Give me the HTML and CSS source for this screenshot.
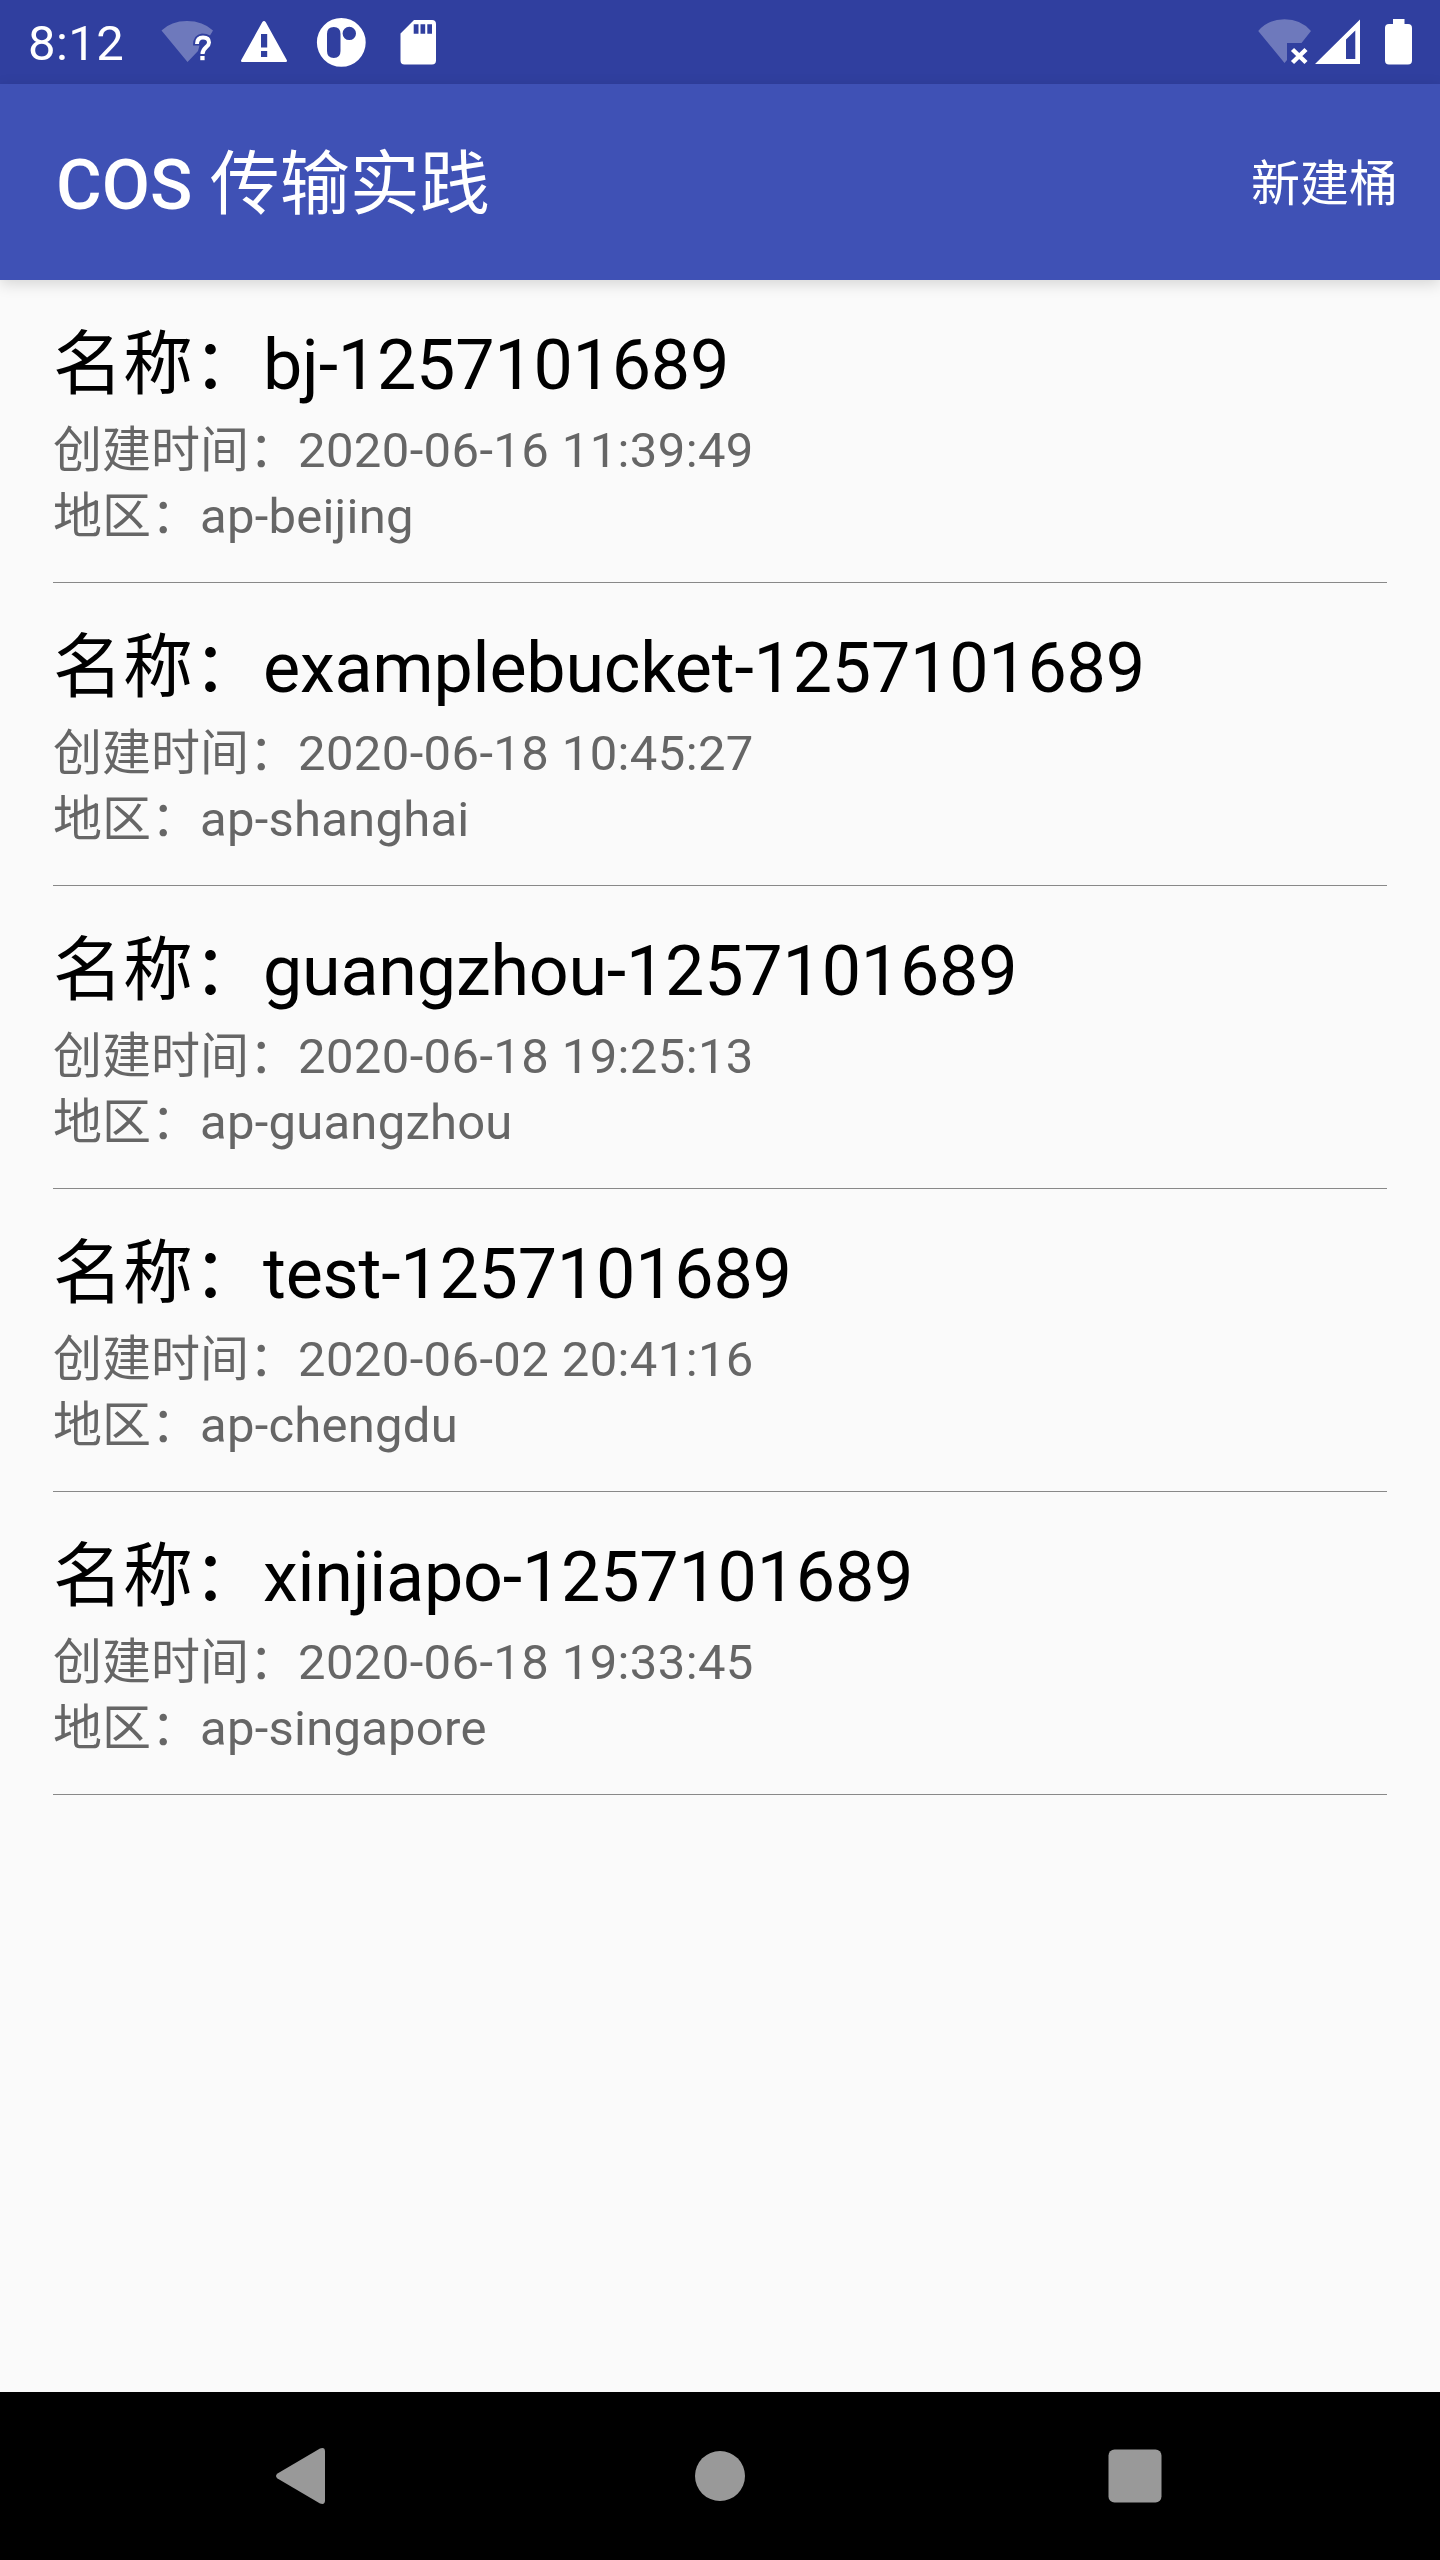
FILE: index.html
```html
<!DOCTYPE html>
<html lang="zh-CN">
<head>
<meta charset="utf-8">
<title>COS 传输实践</title>
<link rel="stylesheet" href="styles.css">
</head>
<body>
<div class="screen">
  <div class="status-bar">
    <span class="clock">8:12</span>
    <svg class="status-left" width="300" height="84" viewBox="0 0 300 84">
      <path fill="#fff" fill-opacity=".3" d="M21.5 30.5Q31 21 47 21T73 30.5L70 35.5Q67 33.500 62 33.500Q53 34.500 53 45.500H59.500L58 51L47.500 62Z"/>
      <path fill="none" stroke="#fff" stroke-width="4" d="M57 44C57 40 59 37.500 63 37.500C67 37.500 69 39.500 69 42.500C69 47.500 62.500 47 62.500 54"/>
      <path fill="#fff" d="M60.300 56h4.300v4.200h-4.300z"/>
      <path fill="#fff" fill-rule="evenodd" d="M122.200 22.200Q124 19.800 125.800 22.200L147 60.500Q147 62 146 62H102Q101 62 101 60.500ZM121 34V47.500H127.200V34ZM121 51V57H127.200V51Z"/>
      <path fill="#fff" fill-rule="evenodd" d="M201.300 18a24.400 24.400 0 1 0 0 48.800a24.400 24.400 0 1 0 0-48.800ZM193.800 27Q200.500 27 200.500 34V51Q200.500 58 193.800 58Q187 58 187 51V34Q187 27 193.800 27ZM209.300 26.700a6.700 6.700 0 1 1 0 13.400a6.700 6.700 0 1 1 0-13.400Z"/>
      <path fill="#fff" fill-rule="evenodd" d="M274 20H292Q296 20 296 24V60.500Q296 64.500 292 64.500H264.500Q260.500 64.500 260.500 60.500V33.500ZM273.700 24.300V33.700H278.500V24.300ZM280.500 24.300V33.700H285.200V24.300ZM287.300 24.300V33.700H292V24.300Z"/>
    </svg>
    <svg class="status-right" width="160" height="84" viewBox="0 0 160 84">
      <path fill="#fff" fill-opacity=".3" d="M.2 31Q10 19.300 26.500 19.300T53 31L43.500 43H29V60L26.500 63Z"/>
      <path stroke="#fff" stroke-width="4.500" d="M34.500 49.500L48 62.500M48 49.500L34.500 62.500"/>
      <path fill="#fff" fill-rule="evenodd" d="M102 19.500V64H57ZM88 39.500V59H97.300V30.500Z"/>
      <path fill="#fff" d="M135 19h11.500v5H150q4 0 4 4v32.500q0 4-4 4h-19q-4 0-4-4V28q0-4 4-4h4z"/>
    </svg>
  </div>
  <header class="app-bar">
    <h1 class="title"><span class="title-latin">COS</span> 传输实践</h1>
    <span class="action">新建桶</span>
  </header>
  <main class="buckets">
    <section class="bucket">
      <div class="name">名称：<span class="name-value">bj-1257101689</span></div>
      <div class="detail">创建时间：<span class="time-value">2020-06-16 11:39:49</span></div>
      <div class="detail">地区：<span class="region-value">ap-beijing</span></div>
    </section>
    <section class="bucket">
      <div class="name">名称：<span class="name-value">examplebucket-1257101689</span></div>
      <div class="detail">创建时间：<span class="time-value">2020-06-18 10:45:27</span></div>
      <div class="detail">地区：<span class="region-value">ap-shanghai</span></div>
    </section>
    <section class="bucket">
      <div class="name">名称：<span class="name-value">guangzhou-1257101689</span></div>
      <div class="detail">创建时间：<span class="time-value">2020-06-18 19:25:13</span></div>
      <div class="detail">地区：<span class="region-value">ap-guangzhou</span></div>
    </section>
    <section class="bucket">
      <div class="name">名称：<span class="name-value">test-1257101689</span></div>
      <div class="detail">创建时间：<span class="time-value">2020-06-02 20:41:16</span></div>
      <div class="detail">地区：<span class="region-value">ap-chengdu</span></div>
    </section>
    <section class="bucket">
      <div class="name">名称：<span class="name-value">xinjiapo-1257101689</span></div>
      <div class="detail">创建时间：<span class="time-value">2020-06-18 19:33:45</span></div>
      <div class="detail">地区：<span class="region-value">ap-singapore</span></div>
    </section>
  </main>
  <nav class="nav-bar">
    <svg width="60" height="60" viewBox="0 0 60 60"><path fill="#999" d="M6.500 27.500L49 2.500Q54 .8 54 5.500V54.500Q54 59.200 49 57.500L6.500 32.500Q3.500 30 6.500 27.500Z"/></svg>
    <svg width="60" height="60" viewBox="0 0 60 60"><circle cx="32" cy="30" r="25" fill="#999"/></svg>
    <svg width="60" height="60" viewBox="0 0 60 60"><rect x="3.500" y="3.500" width="53" height="53" rx="6" fill="#999"/></svg>
  </nav>
</div>
</body>
</html>
```
FILE: styles.css
```css
* { box-sizing: border-box; }
body {
  margin: 0;
  background: #fafafa;
  font-family: Roboto, "Noto Sans CJK SC", sans-serif;
}
.screen {
  width: 1440px;
  height: 2560px;
  display: flex;
  flex-direction: column;
}
.status-bar {
  height: 84px;
  flex: none;
  display: flex;
  background: #303f9f;
  color: #fff;
}
.clock {
  width: 140px;
  padding-left: 28px;
  font-size: 49px;
  line-height: 88px;
  letter-spacing: .4px;
}
.status-right { margin-left: auto; margin-right: 22px; }
.app-bar {
  height: 196px;
  flex: none;
  display: flex;
  justify-content: space-between;
  padding: 0 42px 0 56px;
  background: #3f51b5;
  color: #fff;
  box-shadow: 0 4px 14px rgba(0, 0, 0, .15);
}
.title {
  margin: 0;
  font-size: 70px;
  font-weight: 400;
  line-height: 202px;
  white-space: nowrap;
}
.title-latin { font-weight: 500; }
.action { font-size: 49px; line-height: 202px; }
.buckets { flex: 1; padding: 0 53px; }
.bucket {
  height: 303px;
  padding-top: 36px;
  border-bottom: 1px solid #888;
  white-space: nowrap;
}
.name {
  height: 98px;
  font-size: 70px;
  line-height: 98px;
  color: #000;
}
.detail {
  height: 66px;
  font-size: 49px;
  line-height: 73px;
  color: #666;
}
.name-value { letter-spacing: -.21px; }
.time-value { letter-spacing: .38px; }
.region-value { letter-spacing: .24px; }
.nav-bar {
  height: 168px;
  flex: none;
  display: flex;
  justify-content: space-between;
  align-items: center;
  padding: 0 275px 0 271px;
  background: #000;
}
```
